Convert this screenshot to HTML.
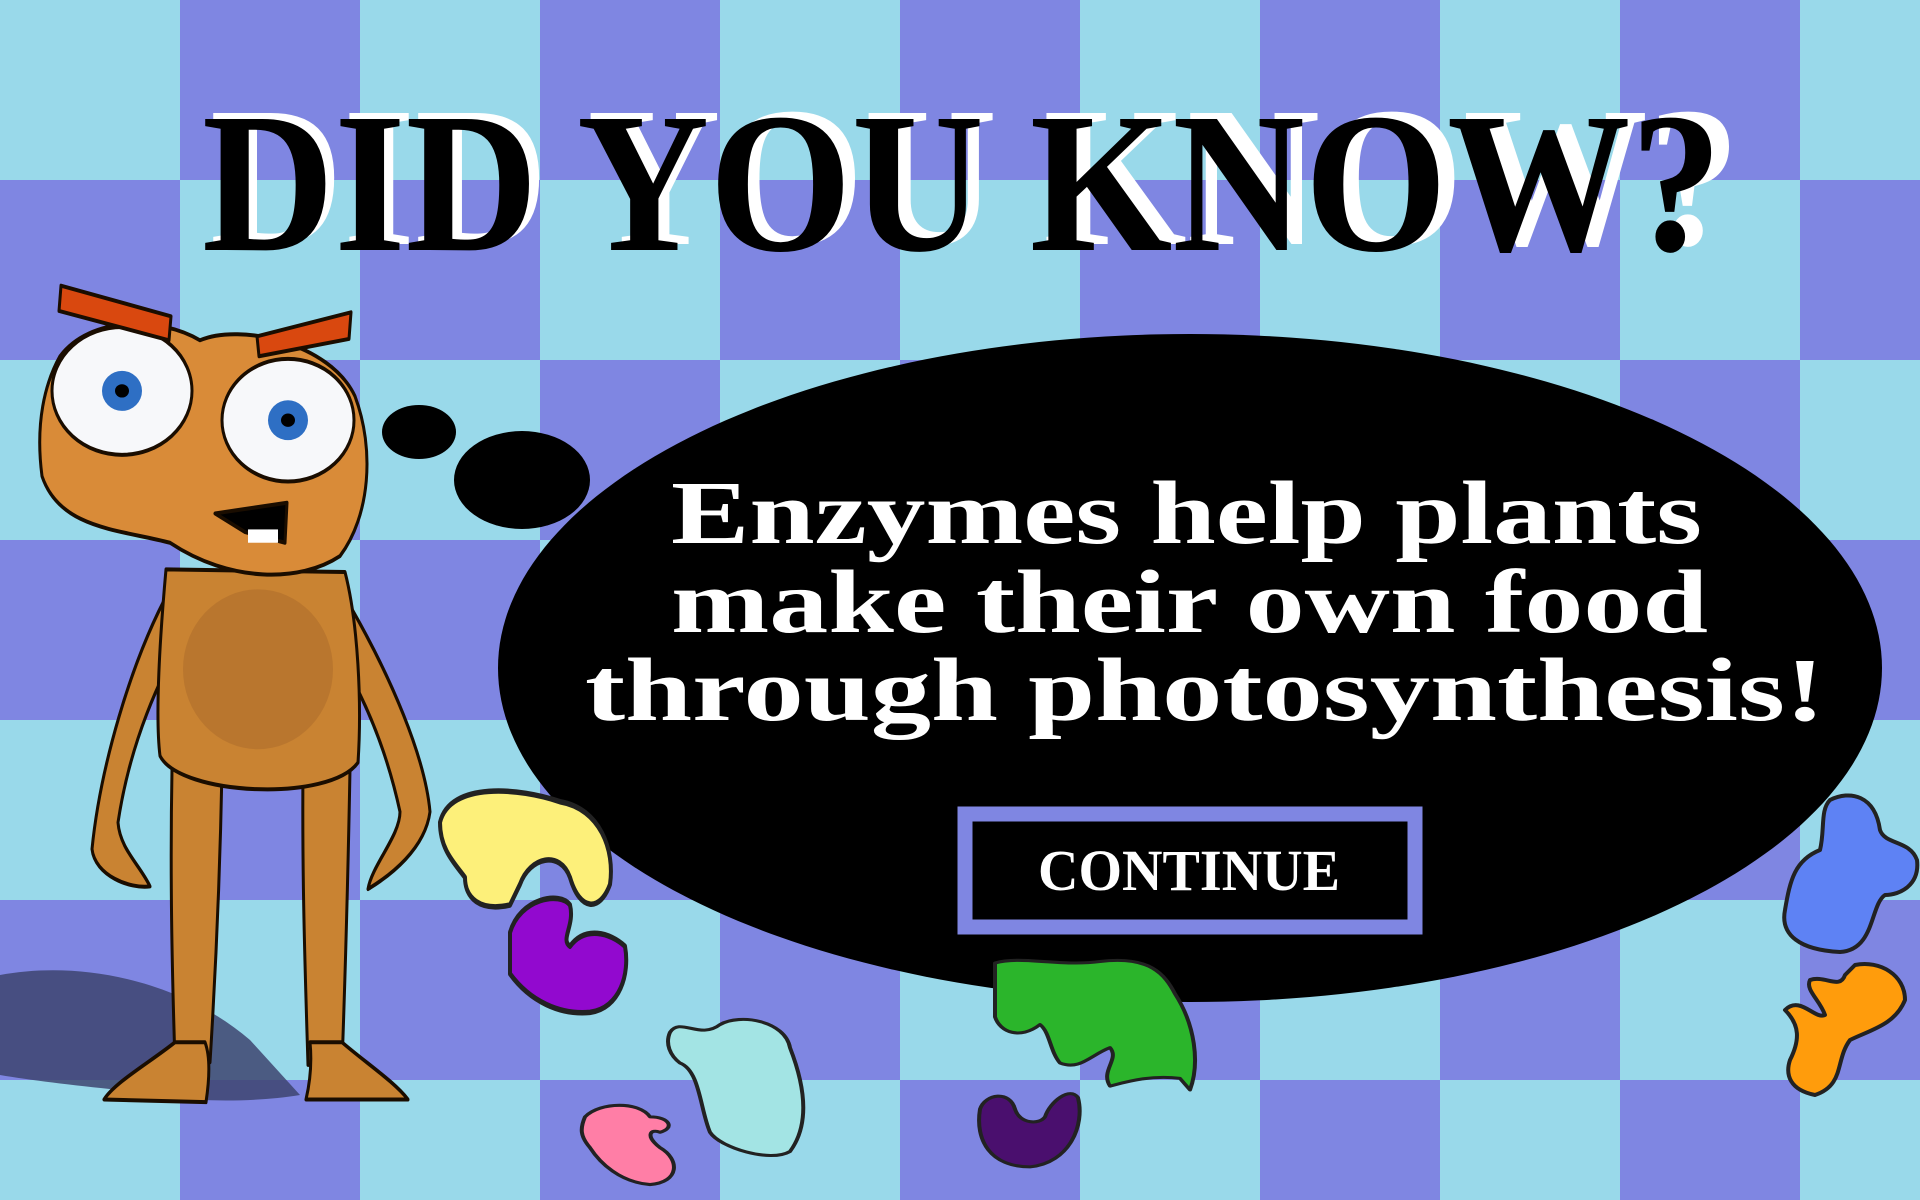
<!DOCTYPE html>
<html><head><meta charset="utf-8"><style>
html,body{margin:0;padding:0;width:1920px;height:1200px;overflow:hidden;background:#99d9ea}
svg{display:block}
text{font-family:"Liberation Serif",serif;font-weight:bold}
</style></head><body>
<svg width="1920" height="1200" viewBox="0 0 1920 1200" xmlns="http://www.w3.org/2000/svg">
<defs>
<pattern id="chk" x="0" y="0" width="360" height="360" patternUnits="userSpaceOnUse">
<rect width="360" height="360" fill="#99d9ea"/>
<rect x="180" y="0" width="180" height="180" fill="#7f86e2"/>
<rect x="0" y="180" width="180" height="180" fill="#7f86e2"/>
</pattern>
</defs>
<rect width="1920" height="1200" fill="url(#chk)"/>
<!-- Title -->
<text x="210" y="244" font-size="200" fill="#fff" textLength="1530" lengthAdjust="spacingAndGlyphs">DID YOU KNOW?</text>
<text x="202" y="250" font-size="200" fill="#000" textLength="1520" lengthAdjust="spacingAndGlyphs">DID YOU KNOW?</text>
<!-- thought bubble -->
<ellipse cx="1190" cy="668" rx="692" ry="334" fill="#000"/>
<ellipse cx="419" cy="432" rx="37" ry="27" fill="#000"/>
<ellipse cx="522" cy="480" rx="68" ry="49" fill="#000"/>
<text x="671" y="543" font-size="90" fill="#fff" textLength="1031" lengthAdjust="spacingAndGlyphs">Enzymes help plants</text>
<text x="671" y="632" font-size="90" fill="#fff" textLength="1037" lengthAdjust="spacingAndGlyphs">make their own food</text>
<text x="585" y="720" font-size="90" fill="#fff" textLength="1240" lengthAdjust="spacingAndGlyphs">through photosynthesis!</text>
<!-- button -->
<rect x="965" y="814" width="450" height="113" fill="#000" stroke="#7f86e2" stroke-width="15"/>
<text x="1038" y="890" font-size="58" fill="#fff" textLength="302" lengthAdjust="spacingAndGlyphs">CONTINUE</text>
<!-- shadow -->
<path d="M0,975 C80,960 180,980 250,1040 L300,1095 C240,1105 160,1100 120,1090 C70,1085 30,1080 0,1075Z" fill="#3d4470" opacity="0.85"/>
<!-- character -->
<g transform="translate(0,279) scale(1,1.332) translate(0,-272)">
<g stroke="#1a0d00" stroke-width="3" stroke-linejoin="round">
<path d="M170,505 C130,560 100,640 92,700 C95,720 130,730 150,728 C140,712 120,700 118,680 C130,620 160,570 185,540Z" fill="#c98332"/>
<path d="M352,520 C390,570 425,630 430,672 C425,700 390,720 368,730 C372,712 400,690 400,672 C385,620 360,580 335,550Z" fill="#c98332"/>
<path d="M172,640 L222,640 C220,720 215,800 210,860 L175,860 C172,790 170,720 172,640Z" fill="#c98332"/>
<path d="M303,640 L350,640 C348,720 345,800 342,862 L308,862 C305,790 302,720 303,640Z" fill="#c98332"/>
<path d="M175,845 C150,860 115,875 104,888 L206,890 C210,870 210,855 205,845Z" fill="#c98332"/>
<path d="M310,845 C312,860 310,875 306,888 L408,888 C395,875 365,860 342,845Z" fill="#c98332"/>
<path d="M166,490 C160,540 155,600 160,630 C180,660 330,665 358,635 C362,590 358,530 345,492Z" fill="#c98332"/>
<path d="M60,330 C90,300 160,300 200,318 C240,305 330,320 355,360 C375,400 370,450 340,480 C300,500 230,500 170,470 C120,460 60,460 42,420 C35,380 45,350 60,330Z" fill="#d98b38"/>
<ellipse cx="122" cy="356" rx="70" ry="48" fill="#f7f8fa"/>
<ellipse cx="288" cy="378" rx="66" ry="46" fill="#f7f8fa"/>
<path d="M215,448 L287,440 L285,470 L245,462Z" fill="#000"/>
<path d="M61,277 L171,300 L169,318 L59,296Z" fill="#d9480f"/>
<path d="M257,315 L351,297 L349,317 L259,330Z" fill="#d9480f"/>
</g>
<ellipse cx="122" cy="356" rx="20" ry="15" fill="#2e6fc4"/><ellipse cx="122" cy="356" rx="7" ry="5" fill="#000"/>
<ellipse cx="288" cy="378" rx="20" ry="15" fill="#2e6fc4"/><ellipse cx="288" cy="378" rx="7" ry="5" fill="#000"/>
<rect x="248" y="460" width="30" height="10" fill="#fff"/>
<ellipse cx="258" cy="565" rx="75" ry="60" fill="#a96a2a" opacity="0.5"/>
</g>
<!-- jelly blobs -->
<g stroke="#222" stroke-width="4" stroke-linejoin="round">
<g transform="translate(0,-114) scale(1,1.377)">
<path d="M440,680 C450,650 520,655 560,665 C600,670 615,700 610,725 C600,745 580,745 570,720 C560,700 530,705 520,725 L510,740 C480,745 465,735 465,720 C455,710 440,700 440,680Z" fill="#fdf07a"/>
<path d="M510,760 C520,735 560,730 570,740 C575,755 560,765 570,770 C585,755 610,760 625,770 C630,790 620,815 590,818 C560,820 530,810 510,790Z" fill="#9209cf"/>
</g>
<g transform="translate(0,940) scale(1,0.769) translate(0,-940)">
<path d="M670,1060 C680,1040 700,1070 720,1050 C740,1035 785,1045 790,1080 C805,1130 810,1180 790,1215 C770,1230 720,1210 710,1190 C700,1160 700,1110 680,1100 C670,1090 665,1075 670,1060Z" fill="#a3e4e4"/>
<path d="M585,1170 C600,1150 640,1150 650,1170 C670,1170 675,1185 660,1190 C650,1185 645,1195 660,1210 C680,1225 680,1255 650,1258 C620,1255 600,1230 590,1210 C580,1195 580,1185 585,1170Z" fill="#ff7ea6"/>
<path d="M995,970 C1020,960 1060,975 1100,968 C1150,960 1165,985 1175,1010 C1195,1050 1200,1100 1190,1135 L1180,1120 C1150,1115 1125,1125 1110,1130 C1100,1110 1120,1095 1110,1080 C1090,1090 1080,1110 1060,1100 C1050,1085 1050,1060 1040,1050 C1020,1070 1000,1060 995,1040Z" fill="#2bb52b"/>
<path d="M980,1160 C985,1140 1010,1135 1015,1160 C1020,1180 1040,1180 1045,1170 C1050,1150 1070,1130 1078,1145 C1085,1180 1070,1230 1030,1235 C990,1235 975,1200 980,1160Z" fill="#4a0f6e"/>
</g>
<path d="M1830,800 C1850,790 1875,795 1880,830 C1885,845 1910,840 1917,860 C1920,885 1900,895 1885,895 C1870,905 1875,950 1840,952 C1800,950 1780,935 1785,910 C1790,880 1795,860 1820,850 C1825,830 1820,810 1830,800Z" fill="#5e82f4"/>
<path d="M1855,965 C1880,960 1905,975 1905,1000 C1895,1025 1870,1030 1850,1040 C1835,1060 1845,1085 1815,1095 C1790,1090 1785,1075 1790,1060 C1800,1040 1800,1025 1785,1010 C1800,995 1815,1020 1825,1015 C1820,1000 1805,990 1810,980 C1825,975 1840,990 1845,975Z" fill="#ff9c0c"/>
</g>
</svg>
</body></html>
